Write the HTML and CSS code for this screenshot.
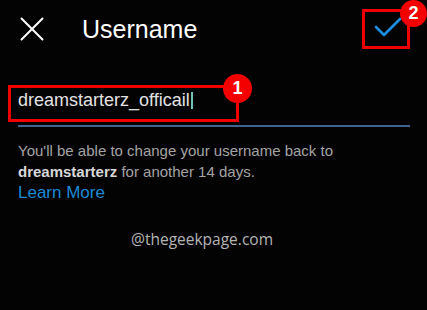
FILE: index.html
```html
<!DOCTYPE html>
<html>
<head>
<meta charset="utf-8">
<link rel="stylesheet" href="styles.css">
</head>
<body>
<div class="screen">
  <header class="header">
    <svg class="close" width="24" height="24" viewBox="0 0 24 24"><path d="M1.5 1.5 L22.5 22.5 M22.5 1.5 L1.5 22.5" stroke="#fff" stroke-width="2" fill="none" stroke-linecap="round"/></svg>
    <div class="title">Username</div>
    <div class="done">
      <svg width="42" height="34" viewBox="0 0 42 34"><path d="M11 15 L19 23 L35 7" stroke="#1d8fe1" stroke-width="2.6" fill="none" stroke-linecap="round" stroke-linejoin="round"/></svg>
      <span class="badge badge-2">2</span>
    </div>
  </header>
  <div class="field">
    <div class="annot">
      <span class="value">dreamstarterz_officail</span><span class="caret"></span>
      <span class="badge badge-1">1</span>
    </div>
    <div class="underline"></div>
  </div>
  <p class="help">You'll be able to change your username back to<br><b>dreamstarterz</b> for another 14 days.<br><a class="learn">Learn More</a></p>
  <div class="mark">@thegeekpage.com</div>
</div>
</body>
</html>
```
FILE: styles.css
```css
html, body {
  margin: 0;
  padding: 0;
  background: #000;
}
.screen {
  width: 427px;
  height: 310px;
  background: #030303;
  font-family: "Liberation Sans", Arial, sans-serif;
  overflow: hidden;
}
.header {
  display: flex;
  align-items: center;
  height: 58px;
  padding-left: 20px;
  padding-right: 17px;
}
.close {
  display: block;
  flex: none;
}
.title {
  margin-left: 38px;
  color: #fff;
  font-size: 25px;
  line-height: 30px;
}
.done {
  position: relative;
  margin-left: auto;
  width: 48px;
  height: 40px;
  box-sizing: border-box;
  border: 3px solid #f00000;
}
.done svg {
  display: block;
}
.badge {
  position: absolute;
  border-radius: 50%;
  background: #f40000;
  color: #fff;
  font-weight: bold;
  display: flex;
  align-items: center;
  justify-content: center;
  font-family: "Liberation Sans", Arial, sans-serif;
}
.badge-2 {
  left: 35px;
  top: -12px;
  width: 27px;
  height: 27px;
  font-size: 18px;
}
.badge-1 {
  left: 212px;
  top: -14px;
  width: 29px;
  height: 29px;
  font-size: 18px;
}
.field {
  margin-top: 27px;
}
.annot {
  position: relative;
  margin-left: 8px;
  width: 231px;
  height: 37px;
  box-sizing: border-box;
  border: 3px solid #f00000;
  padding: 2px 0 0 7px;
  display: flex;
  align-items: flex-start;
}
.value {
  color: #e2e2e2;
  font-size: 18px;
  line-height: 20px;
}
.caret {
  width: 2px;
  height: 17px;
  margin-top: 2px;
  margin-left: 1px;
  background: #6fc4b8;
}
.underline {
  margin: 3px 17px 0 18px;
  height: 2px;
  background: #3f6494;
}
.help {
  margin: 13px 0 0 18px;
  color: #a3a3a3;
  font-size: 15px;
  line-height: 21px;
}
.help b {
  color: #d8d8d8;
}
.learn {
  color: #1b8ad6;
  font-size: 17px;
}
.mark {
  margin-top: 26px;
  padding-left: 131px;
  color: #b4b4b4;
  font-family: "Open Sans", "Noto Sans", sans-serif;
  font-size: 15.5px;
  line-height: 20px;
}
```
